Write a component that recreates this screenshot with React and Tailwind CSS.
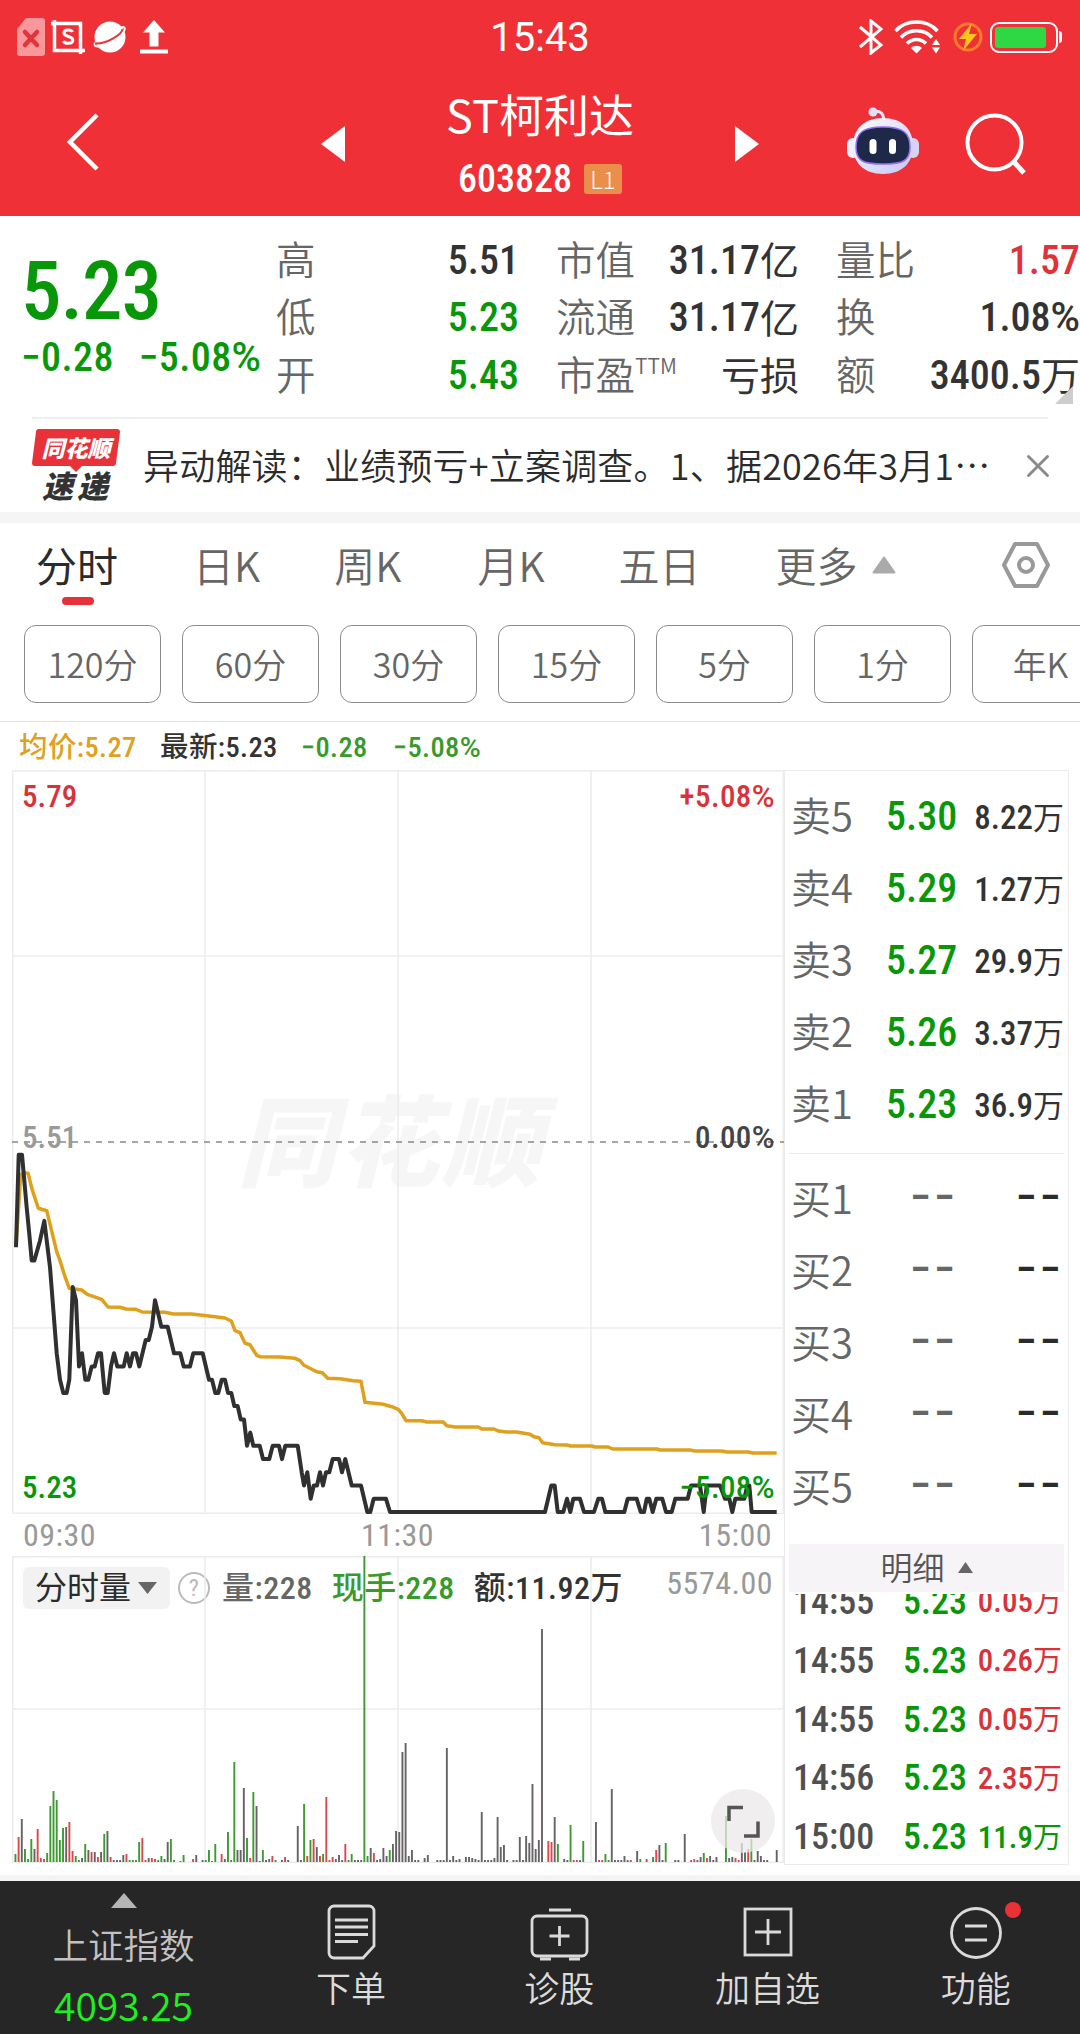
import { X } from "lucide-react";

const GREEN = "text-[#089708]";
const RED = "text-[#d9333a]";
const NUM = "font-['Roboto','Noto_Sans_CJK_SC',sans-serif] [font-stretch:75%] font-medium";

const quoteColumns = [
  {
    width: "w-[243px]",
    items: [
      { label: "高", value: "5.51", color: "text-[#333]" },
      { label: "低", value: "5.23", color: GREEN },
      { label: "开", value: "5.43", color: GREEN },
    ],
  },
  {
    width: "w-[243px]",
    items: [
      { label: "市值", value: "31.17", unit: "亿", color: "text-[#333]" },
      { label: "流通", value: "31.17", unit: "亿", color: "text-[#333]" },
      { label: "市盈", sup: "TTM", value: "", unit: "亏损", color: "text-[#333]" },
    ],
  },
  {
    width: "w-[244px]",
    items: [
      { label: "量比", value: "1.57", color: "text-[#e03238]" },
      { label: "换", value: "1.08", percent: true, color: "text-[#333]" },
      { label: "额", value: "3400.5", unit: "万", color: "text-[#333]" },
    ],
  },
];

const tabs = [
  { label: "日K", margin: "ml-[75px]" },
  { label: "周K", margin: "ml-[74px]" },
  { label: "月K", margin: "ml-[76px]" },
  { label: "五日", margin: "ml-[74px]" },
  { label: "更多", margin: "ml-[75px]" },
];

const periods = ["120分", "60分", "30分", "15分", "5分", "1分", "年K"];

const sells = [
  { label: "卖5", price: "5.30", volume: "8.22" },
  { label: "卖4", price: "5.29", volume: "1.27" },
  { label: "卖3", price: "5.27", volume: "29.9" },
  { label: "卖2", price: "5.26", volume: "3.37" },
  { label: "卖1", price: "5.23", volume: "36.9" },
];

const buys = ["买1", "买2", "买3", "买4", "买5"];

const trades = [
  { time: "14:55", price: "5.23", volume: "0.05", color: RED },
  { time: "14:55", price: "5.23", volume: "0.26", color: RED },
  { time: "14:55", price: "5.23", volume: "0.05", color: RED },
  { time: "14:56", price: "5.23", volume: "2.35", color: RED },
  { time: "15:00", price: "5.23", volume: "11.9", color: GREEN },
];

// [x, cents above 5.23]
const priceLine = [
  [48, 20], [56, 27], [66, 27], [80, 23], [88, 21], [95, 19], [103, 19], [120, 20.5], [133, 22],
  [150, 18.5], [170, 12], [180, 10], [190, 9], [200, 9], [208, 10], [218, 17], [228, 16], [237, 11],
  [246, 12], [256, 10], [265, 10], [275, 11], [284, 11], [294, 12], [303, 12], [314, 9], [323, 9],
  [333, 11], [342, 12], [352, 11], [371, 11], [380, 12], [390, 11], [399, 12], [408, 12], [418, 11],
  [437, 13], [446, 13], [456, 14], [465, 16], [484, 14], [503, 14], [522, 12], [541, 12], [551, 11],
  [570, 11], [580, 12], [608, 12], [627, 10], [636, 10], [646, 9], [655, 9], [665, 10], [675, 10],
  [684, 9], [694, 9], [703, 8], [713, 8], [722, 7], [732, 7], [741, 5], [751, 6], [760, 5],
  [779, 5], [789, 4], [808, 4], [818, 5], [837, 5], [846, 4], [856, 5], [893, 5], [905, 3],
  [912, 2], [922, 3], [932, 1], [941, 2], [951, 2], [960, 3], [969, 2], [978, 3], [988, 3],
  [998, 4], [1017, 4], [1026, 3], [1036, 4], [1055, 2], [1083, 2], [1102, 0], [1111, 0], [1121, 1],
  [1158, 1], [1170, 0], [1635, 0], [1654, 2], [1664, 2], [1673, 0], [1690, 0], [1701, 1], [1711, 0],
  [1720, 1], [1740, 1], [1752, 0], [1782, 0], [1795, 1], [1806, 1], [1816, 0], [1873, 0], [1883, 1],
  [1910, 1], [1922, 0], [1932, 0], [1940, 1], [1948, 1], [1958, 0], [1969, 1], [1987, 1], [1998, 0],
  [2015, 0], [2026, 1], [2063, 1], [2073, 2], [2100, 2], [2111, 0], [2120, 2], [2160, 2], [2175, 1],
  [2188, 1], [2197, 0], [2206, 1], [2233, 1], [2242, 2], [2248, 2], [2255, 0], [2330, 0],
];

const averageLine = [
  [48, 500], [62, 285], [72, 278], [84, 280], [97, 330], [115, 385], [140, 392], [170, 515],
  [180, 542], [195, 590], [208, 625], [245, 630], [262, 643], [305, 658], [324, 681], [360, 682],
  [378, 687], [408, 688], [427, 696], [495, 697], [520, 702], [575, 702], [620, 707], [675, 714],
  [694, 723], [705, 752], [720, 758], [735, 790], [750, 794], [770, 826], [780, 830], [840, 831],
  [885, 835], [900, 842], [912, 856], [950, 875], [967, 878], [983, 895], [1020, 896], [1060, 902],
  [1083, 904], [1095, 967], [1150, 973], [1175, 980], [1195, 988], [1205, 1000], [1218, 1022],
  [1265, 1022], [1280, 1026], [1330, 1026], [1340, 1037], [1365, 1041], [1435, 1041], [1445, 1047],
  [1482, 1047], [1495, 1053], [1520, 1056], [1550, 1056], [1590, 1063], [1602, 1070], [1617, 1073],
  [1628, 1088], [1665, 1094], [1700, 1095], [1712, 1098], [1775, 1098], [1785, 1101], [1825, 1101],
  [1838, 1107], [1970, 1107], [1980, 1110], [2070, 1110], [2085, 1113], [2165, 1113], [2180, 1116],
  [2245, 1116], [2258, 1119], [2330, 1119],
];

// one entry per minute: height + colour (g = down, r = up, k = flat)
const volumes = `8g 25r 43k 13g 3g 23g 13k 33r 4r 3r 9g 56g 71g 62g 22g 34g 35k 40r 11r 6g 2g 4k 18g 12k 10r
10k 5r 10k 28g 31k 5r 2k 2k 2k 7k 8r 2g 2g 2g 20g 24r 2r 4k 4r 3r 2g 6g 3k 20k 23g 2g 0k 1g 7g 0k 0k 3r
7k 0k 2k 2g 12g 1k 18g 0k 8r 3k 30g 2g 100g 12k 12k 74k 24g 4r 70g 56k 1k 12g 2k 3k 6r 2g 0k 2k 5r 2k 0k
0k 36k 2k 58g 6r 22g 23r 15k 6r 8g 65r 2r 5r 3k 7k 2k 18r 2g 8g 2k 2k 2k 306g 6g 14k 9r 2k 3k 14k 6k 12g
18k 31k 30k 110k 119k 6k 12k 2k 2k 0k 4k 7k 0k 0k 2k 2k 2k 114k 2k 6k 2k 3k 0k 5k 5k 4k 3k 2k 50k 2k 2k
2k 4k 45k 15k 17k 2k 0k 2k 2k 25k 2k 26k 19k 78k 13k 22k 233k 0k 21r 20r 45k 18g 0k 3k 2k 37g 2r 2r 2k
21g 0k 0k 0k 40k 2r 2r 8g 2g 73k 2k 2k 2k 6k 2k 2r 0k 11k 3g 0k 3r 0k 5g 12r 17k 2k 19g 0k 0k 2k 2k 0k
28k 0k 2r 3r 2k 5k 9g 4r 6k 2k 5k 0k 0k 46g 4k 5k 4r 2r 19k 10k 13r 23g 2k 11k 6k 2k 2k 0k 0k 12k`
  .split(/\s+/)
  .map((v) => ({ height: parseInt(v, 10), color: v.slice(-1) }));

const volumeColors = { g: "#3c9a30", r: "#d6494c", k: "#666266" };

const toPoints = (line) =>
  line.map(([x, y]) => `${(x / 3 - 12).toFixed(1)},${(y / 3 + 310).toFixed(1)}`).join(" ");

const Percent = () => <span className="[font-stretch:100%]">%</span>;

const StatusBar = () => (
  <div className="flex h-[72px] items-center justify-between px-[17px] pt-0.5">
    <div className="flex w-[440px] items-center">
      <svg width="28" height="38" viewBox="0 0 28 38">
        <path d="M9 0H25a3 3 0 0 1 3 3V35a3 3 0 0 1-3 3H3a3 3 0 0 1-3-3V11Z" fill="#f9989b" />
        <path d="M8 14l12 13M20 14L8 27" stroke="#e2343a" strokeWidth="4.5" strokeLinecap="round" />
      </svg>
      <svg className="ml-1.5" width="34" height="34" viewBox="0 0 34 34" fill="none" stroke="#fff">
        <path d="M3.5 0V30.5H34M0 3.5H29.5V34" strokeWidth="3.5" />
        <path d="M21.5 12c-1-2.500-8.500-3.200-8.500 1 0 4.500 8.800 2.500 8.800 7 0 4.500-8.300 4-9.300 1" strokeWidth="3" />
      </svg>
      <svg className="ml-2" width="34" height="34" viewBox="0 0 34 34">
        <circle cx="17" cy="17" r="15.500" fill="#fff" />
        <path d="M28 7.500c3-1 4.500 0 3.500 2.500-3 6-19 16.500-26.500 16.500-3 0-4-1-3-4" fill="none" stroke="#fff" strokeWidth="2" />
        <path d="M29.500 9c0 5-15.500 15-27.500 14.500" fill="none" stroke="#ef3036" strokeWidth="2" />
      </svg>
      <svg className="ml-[13px]" width="28" height="34" viewBox="0 0 28 34" fill="#fff">
        <path d="M14 0L25 12.500H18.500V26.500H9.500V12.500H3Z" />
        <path d="M0 29.500H28V33.500H0Z" />
      </svg>
    </div>
    <span className="pt-0.5 font-['Roboto',sans-serif] text-[40px] leading-none text-white">15:43</span>
    <div className="flex w-[440px] items-center justify-end pr-[3px]">
      <svg width="24" height="36" viewBox="0 0 24 36" fill="none" stroke="#fff" strokeWidth="3">
        <path d="M1 8l21 18-10 8V2l10 8L1 28" />
      </svg>
      <svg className="ml-[11px]" width="46" height="34" viewBox="0 0 46 34" fill="none" stroke="#fff" strokeWidth="3.500">
        <path d="M1.500 11C12-1 33-1 43.500 11M7 17.500c8-9 23-9 31 0M13 23.500c5-5.500 14-5.500 19 0" />
        <path d="M17 28c3-3 8-3 11 0l-5.500 5.500Z" fill="#fff" stroke="none" />
        <path d="M42 19l4 6h-8ZM42 33.500l4-6h-8Z" fill="#fff" stroke="none" />
      </svg>
      <svg className="ml-[13px]" width="30" height="32" viewBox="0 0 30 32">
        <circle cx="15" cy="16" r="13" fill="none" stroke="#fb7a2c" strokeWidth="3" />
        <path d="M19 2L6 18h7l-3 12 14-17h-8Z" fill="#ffc51c" />
      </svg>
      <div className="ml-[7px] flex h-[31px] w-[68px] items-center rounded-[9px] border-2 border-white p-[3px]">
        <div className="h-[21px] w-[51px] rounded-[3px] bg-[#2dd844]" />
      </div>
      <div className="ml-px mr-[-2px] h-3 w-[3px] rounded-r bg-white" />
    </div>
  </div>
);

const Robot = () => (
  <svg width="74" height="70" viewBox="0 0 74 70">
    <defs>
      <linearGradient id="shell" x1="0" y1="0" x2="1" y2="1">
        <stop offset="0" stopColor="#ffffff" />
        <stop offset="0.6" stopColor="#dcdcf8" />
        <stop offset="1" stopColor="#c9c4f2" />
      </linearGradient>
    </defs>
    <path d="M27 5c8 0 10 2 11 9" fill="none" stroke="#e8e4fa" strokeWidth="3" />
    <circle cx="27" cy="6" r="4.500" fill="#e4e2fa" />
    <rect x="1" y="32" width="12" height="20" rx="6" fill="#f1effc" />
    <rect x="61" y="32" width="12" height="20" rx="6" fill="#d8d2f5" />
    <path d="M37 12c19 0 30 11 30 28S56 68 37 68 7 57 7 40 18 12 37 12Z" fill="url(#shell)" />
    <path d="M37 21c20 0 27 6 27 20s-7 17-27 17-27-3-27-17 7-20 27-20Z" fill="#1e2848" stroke="#8f6cf0" strokeWidth="1.500" />
    <rect x="23.500" y="33" width="7" height="15" rx="3.500" fill="#fff" />
    <rect x="43" y="33" width="7" height="15" rx="3.500" fill="#fff" />
  </svg>
);

const NavBar = () => (
  <div className="flex h-36 items-center">
    <svg className="mb-1 ml-[66px]" width="36" height="60" viewBox="0 0 36 60">
      <path d="M31 3L4 30L31 57" fill="none" stroke="#fff" strokeWidth="4.500" />
    </svg>
    <svg className="ml-[219px]" width="24" height="36" viewBox="0 0 24 36">
      <path d="M24 0V36L0 18Z" fill="#fff" />
    </svg>
    <div className="flex w-[390px] flex-col items-center">
      <h1 className="text-[45px] leading-[52px] text-white">ST柯利达</h1>
      <div className="mt-[17px] flex h-[44px] items-center gap-3 text-white">
        <span className={`${NUM} text-[38px] leading-[44px]`}>603828</span>
        <span className="flex h-[30px] w-[38px] items-center justify-center rounded-[3px] bg-[#ea8e4b] text-2xl font-light leading-none">
          L1
        </span>
      </div>
    </div>
    <svg width="24" height="36" viewBox="0 0 24 36">
      <path d="M0 0V36L24 18Z" fill="#fff" />
    </svg>
    <div className="mb-1.5 ml-[87px]">
      <Robot />
    </div>
    <svg className="ml-[44px]" width="64" height="64" viewBox="0 0 64 64" fill="none" stroke="#fff" strokeWidth="4">
      <circle cx="30.500" cy="30.500" r="27" />
      <path d="M50 50L60 61" strokeWidth="5" />
    </svg>
  </div>
);

const Quote = () => (
  <section className="relative flex h-[201px]">
    <div className={`w-[276px] shrink-0 pl-[21px] pt-[35px] ${NUM} ${GREEN}`}>
      <div className="text-[81px] leading-[81px] tracking-[-1px]">5.23</div>
      <div className="mt-[6px] flex gap-[25px] whitespace-nowrap text-[40px] leading-[40px] tracking-[0.4px]">
        <span>−0.28</span>
        <span>
          −5.08
          <Percent />
        </span>
      </div>
    </div>
    <div className="flex flex-1 justify-between pt-4">
      {quoteColumns.map((col, i) => (
        <div key={i} className={col.width}>
          {col.items.map((item) => (
            <div key={item.label} className="flex h-[57.5px] items-center justify-between leading-none">
              <span className="mb-[7px] flex whitespace-nowrap text-[39.5px] font-[350] text-[#666]">
                {item.label}
                {item.sup && <span className="pt-0.5 text-[21px]">{item.sup}</span>}
              </span>
              <span className={`flex items-center ${item.color}`}>
                <span className={`${NUM} text-[40px]`}>
                  {item.value}
                  {item.percent && <Percent />}
                </span>
                {item.unit && <span className="mb-[4px] text-[39px]">{item.unit}</span>}
              </span>
            </div>
          ))}
        </div>
      ))}
    </div>
    <svg className="absolute bottom-[13px] right-[7px]" width="18" height="18" viewBox="0 0 18 18">
      <path d="M18 0V18H0Z" fill="#cdcdcd" />
    </svg>
  </section>
);

const NewsFlash = () => (
  <section className="ml-8 mr-8 flex h-[95px] items-center border-t-2 border-[#edf0f1]">
    <div className="mb-1 w-[90px] shrink-0">
      <div className="relative flex h-[37px] w-[88px] items-center justify-center">
        <svg className="absolute left-0 top-0" width="88" height="44" viewBox="0 0 88 44">
          <path d="M8 0H85a3 3 0 0 1 3 3L84 34a3 3 0 0 1-3 3H50L44 43L38 37H3a3 3 0 0 1-3-3L4 3a3 3 0 0 1 4-3Z" fill="#e83138" />
        </svg>
        <span className="relative text-[23px] font-black italic leading-none text-white">同花顺</span>
      </div>
      <div className="mt-1 flex w-[86px] justify-center gap-1 text-[31px] font-black italic leading-[29px] text-[#333]">
        <span>速</span>
        <span>递</span>
      </div>
    </div>
    <p className="mb-[3px] ml-[21px] whitespace-nowrap text-[36px] font-[350] leading-none tracking-[0.2px] text-[#2b2b2b]">
      异动解读：业绩预亏+立案调查。1、据2026年3月1⋯
    </p>
    <X size={38} strokeWidth={1.8} className="ml-auto mr-[-9px] shrink-0 text-[#8a8a8a]" />
  </section>
);

const Tabs = () => (
  <nav className="flex h-[92px] items-center pb-[9px] text-[41px] font-[350] leading-none text-[#666]">
    <div className="relative ml-9 font-normal text-[#2b2b2b]">
      分时
      <div className="absolute -bottom-5 left-[26px] h-2 w-8 rounded-full bg-[#e5323a]" />
    </div>
    {tabs.map((tab) => (
      <span key={tab.label} className={tab.margin}>
        {tab.label}
      </span>
    ))}
    <svg className="ml-[14px]" width="24" height="18" viewBox="0 0 24 18">
      <path d="M12 1.500L22.500 16.500H1.500Z" fill="#aaa" stroke="#aaa" strokeWidth="2" strokeLinejoin="round" />
    </svg>
    <svg className="ml-[105px]" width="50" height="48" viewBox="0 0 50 48" fill="none" stroke="#999" strokeWidth="4" strokeLinejoin="round">
      <path d="M14 3H36L47 24L36 45H14L3 24Z" />
      <circle cx="25" cy="24" r="7" />
    </svg>
  </nav>
);

const Periods = () => (
  <div className="flex h-[107px] gap-[21px] overflow-hidden border-b border-[#e3e3e3] pl-6 pt-[10px]">
    {periods.map((p) => (
      <button
        key={p}
        className="flex h-[78px] w-[137px] shrink-0 items-center justify-center rounded-xl border border-[#8c8c8c] text-[34px] font-[350] leading-none text-[#666]"
      >
        {p}
      </button>
    ))}
  </div>
);

const Grid = ({ height, rows }) => (
  <g stroke="#ececec" strokeWidth="1.500" fill="none">
    <rect x="0.750" y="0.750" width="770.500" height={height - 1.5} />
    <path d={`M193 0V${height}M386 0V${height}M579 0V${height}`} />
    {rows.map((y) => (
      <path key={y} d={`M0 ${y}H772`} />
    ))}
  </g>
);

const PriceChart = () => (
  <div className="relative h-[744px] w-[772px]">
    <svg className="block" width="772" height="744" viewBox="0 0 772 744">
      <text
        x="225"
        y="409"
        textLength="304"
        className="font-['Noto_Sans_CJK_SC',sans-serif] text-[99px] font-black italic"
        fill="#f6f6f6"
      >
        同花顺
      </text>
      <Grid height={744} rows={[186, 558]} />
      <path d="M0 372H772" stroke="#888" strokeWidth="1.500" strokeDasharray="6 6" />
      <polyline points={toPoints(averageLine)} fill="none" stroke="#dfa01c" strokeWidth="3.500" strokeLinejoin="round" />
      <polyline
        points={toPoints(priceLine.map(([x, c]) => [x, 1296 - c * 39.7]))}
        fill="none"
        stroke="#303030"
        strokeWidth="4"
        strokeLinejoin="round"
      />
    </svg>
    <div className={`absolute inset-0 text-[31px] leading-none ${NUM}`}>
      <span className={`absolute left-[10px] top-[11px] ${RED}`}>5.79</span>
      <span className={`absolute right-[9px] top-[11px] tracking-[0.4px] ${RED}`}>
        +5.08
        <Percent />
      </span>
      <span className="absolute left-[10px] top-[352px] text-[#999]">5.51</span>
      <span className="absolute right-[9px] top-[352px] tracking-[0.4px] text-[#444]">
        0.00
        <Percent />
      </span>
      <span className={`absolute left-[10px] top-[702px] ${GREEN}`}>5.23</span>
      <span className={`absolute right-[9px] top-[702px] tracking-[0.4px] ${GREEN}`}>
        −5.08
        <Percent />
      </span>
    </div>
  </div>
);

const VolumeChart = () => (
  <div className="relative h-[307px] w-[772px]">
    <div className={`absolute left-0 top-0 flex h-16 w-full items-center whitespace-nowrap pl-[11px] pr-[11px] text-[32px] leading-none tracking-[0.5px] ${NUM}`}>
      <button className="flex h-[42px] w-[147px] items-center rounded-md bg-[#f2f2f2] pl-3 text-[32px] font-normal tracking-normal text-[#2b2b2b]">
        分时量
        <svg className="ml-[7px]" width="19" height="12" viewBox="0 0 19 12">
          <path d="M0 0H19L9.500 12Z" fill="#666" />
        </svg>
      </button>
      <span className="ml-2 flex h-8 w-8 items-center justify-center rounded-full border-2 border-[#bbb] text-2xl font-normal text-[#bbb]">
        ?
      </span>
      <span className="ml-3 text-[#666]">量:228</span>
      <span className="ml-[19px] text-[#389a2a]">现手:228</span>
      <span className="ml-[19px] text-[#333]">额:11.92万</span>
      <span className="mb-2.5 ml-auto font-normal text-[#999]">5574.00</span>
    </div>
    <svg className="relative block" width="772" height="307" viewBox="0 0 772 307">
      <Grid height={307} rows={[153]} />
      {volumes.map((v, i) => (
        <rect key={i} x={2.5 + i * 3.172} y={306 - v.height} width="1.900" height={v.height} fill={volumeColors[v.color]} />
      ))}
    </svg>
    <button className="absolute bottom-[10px] right-[9px] flex h-16 w-16 items-center justify-center rounded-full bg-[#ebe8ea]/75">
      <svg width="34" height="34" viewBox="0 0 34 34" fill="none" stroke="#555" strokeWidth="3.500">
        <path d="M3 17V3.500H17M32 17.500V32H18" />
      </svg>
    </button>
  </div>
);

const OrderBook = () => (
  <div className={`h-[1095px] w-[285px] border border-[#ebebeb] pl-1 ${NUM}`}>
    <div className="h-[382px] pl-[2px] pr-1 pt-[10px]">
      {sells.map((row) => (
        <div key={row.label} className="flex h-[72px] items-center leading-none">
          <span className="mb-[7px] w-[95px] font-['Noto_Sans_CJK_SC',sans-serif] text-[40px] font-[350] text-[#666]">{row.label}</span>
          <span className={`text-[40px] ${GREEN}`}>{row.price}</span>
          <span className="ml-auto text-[33px] text-[#333]">
            {row.volume}
            <span className="text-[31px] font-normal">万</span>
          </span>
        </div>
      ))}
    </div>
    <div className="mr-1 h-[391px] border-t border-[#e9e9e9] pl-[2px] pt-[10px]">
      {buys.map((label) => (
        <div key={label} className="flex h-[72px] items-center text-[43px] leading-none">
          <span className="mb-[7px] w-[119px] font-['Noto_Sans_CJK_SC',sans-serif] text-[40px] font-[350] text-[#666]">{label}</span>
          <span className="mb-1.5 tracking-[3px] text-[#666]">−−</span>
          <span className="mb-1.5 ml-auto tracking-[3px] text-[#2b2b2b]">−−</span>
        </div>
      ))}
    </div>
    <button className="flex h-12 w-[275px] items-center justify-center gap-[13px] bg-[#f6f4f6] pt-0.5 text-[32px] font-[350] leading-none text-[#555]">
      明细
      <svg className="mb-1" width="15" height="11" viewBox="0 0 15 11">
        <path d="M7.500 0L15 11H0Z" fill="#666" />
      </svg>
    </button>
    {/* the list is scrolled to its end, the first row is cut off */}
    <div className="mt-0.5 flex h-[270px] flex-col justify-end overflow-hidden pr-1.5">
      {trades.map((t, i) => (
        <div key={i} className="flex h-[58.800px] shrink-0 items-center pl-1 pt-[5px] leading-none">
          <span className="w-[110px] text-[36px] text-[#505050]">{t.time}</span>
          <span className={`text-[36px] ${GREEN}`}>{t.price}</span>
          <span className={`ml-auto text-[31px] ${t.color}`}>
            {t.volume}
            <span className="text-[29px] font-normal">万</span>
          </span>
        </div>
      ))}
    </div>
  </div>
);

const Legend = () => (
  <div className={`flex h-12 items-center whitespace-pre pl-[19px] pt-1 text-[28.500px] leading-none tracking-[0.4px] ${NUM}`}>
    <span className="w-[141px] text-[#e0a020]">均价:5.27</span>
    <span className="w-[141px] text-[#333]">最新:5.23</span>
    <span className="w-[92px] text-[#389a2a]">−0.28</span>
    <span className="text-[#389a2a]">
      −5.08
      <Percent />
    </span>
  </div>
);

const navIcons = [
  {
    label: "下单",
    icon: (
      <>
        <path d="M8 2H43a5 5 0 0 1 5 5V42L37 54H8a5 5 0 0 1-5-5V7a5 5 0 0 1 5-5Z" />
        <path d="M9 16H42M9 23H42M9 30.500H42M9 37.500H32" />
      </>
    ),
  },
  {
    label: "诊股",
    icon: (
      <>
        <rect x="-2" y="12" width="55" height="40" rx="5" />
        <path d="M15 6H37M6 55H17M35 55H46M25.500 22V42M15.500 32H35.500" />
      </>
    ),
  },
  {
    label: "加自选",
    icon: (
      <>
        <rect x="2" y="5" width="46" height="46" />
        <path d="M25 15V41M12 28H38" />
      </>
    ),
  },
  {
    label: "功能",
    badge: true,
    icon: (
      <>
        <circle cx="25" cy="29" r="24.500" />
        <path d="M14 22H36M14 36H36" />
      </>
    ),
  },
];

const BottomBar = () => (
  <footer className="flex h-[153px] bg-[#262626] text-[35px] font-[350] leading-none text-[#dcdcdc]">
    <div className="flex w-[247px] flex-col items-center">
      <svg className="mt-3" width="26" height="15" viewBox="0 0 26 15">
        <path d="M13 0L26 15H0Z" fill="#b5b5b5" />
      </svg>
      <span className="mt-[18px] text-[35.500px] text-[#c2c2c2]">上证指数</span>
      <span className="mt-[23px] text-[39px] text-[#1ff01f]">4093.25</span>
    </div>
    {navIcons.map((item) => (
      <div key={item.label} className="flex flex-1 flex-col items-center">
        <div className="relative mt-[23px]">
          <svg className="overflow-visible" width="50" height="58" viewBox="0 0 50 58" fill="none" stroke="#dadada" strokeWidth="2.800">
            {item.icon}
          </svg>
          {item.badge && <span className="absolute -right-5 -top-0.5 h-4 w-4 rounded-full bg-[#ea3136]" />}
        </div>
        <span className="mt-[7px]">{item.label}</span>
      </div>
    ))}
  </footer>
);

const App = () => {
  return (
    <div className="w-[1080px] overflow-hidden bg-white font-['Noto_Sans_CJK_SC',sans-serif]">
      <header className="h-[216px] bg-[#ef3036]">
        <StatusBar />
        <NavBar />
      </header>
      <Quote />
      <NewsFlash />
      <div className="h-[11px] bg-[#f6f5f6]" />
      <Tabs />
      <Periods />
      <Legend />
      <main className="flex h-[1105px] pl-3">
        <div>
          <PriceChart />
          <div className={`flex h-[42px] w-[772px] items-center justify-between pl-[11px] pr-3 text-[32px] font-normal leading-none tracking-[0.5px] text-[#999] font-['Roboto',sans-serif] [font-stretch:75%]`}>
            <span>09:30</span>
            <span>11:30</span>
            <span>15:00</span>
          </div>
          <VolumeChart />
        </div>
        <OrderBook />
      </main>
      <div className="h-[6px] bg-[#f4f4f4]" />
      <BottomBar />
    </div>
  );
};

export default App;
